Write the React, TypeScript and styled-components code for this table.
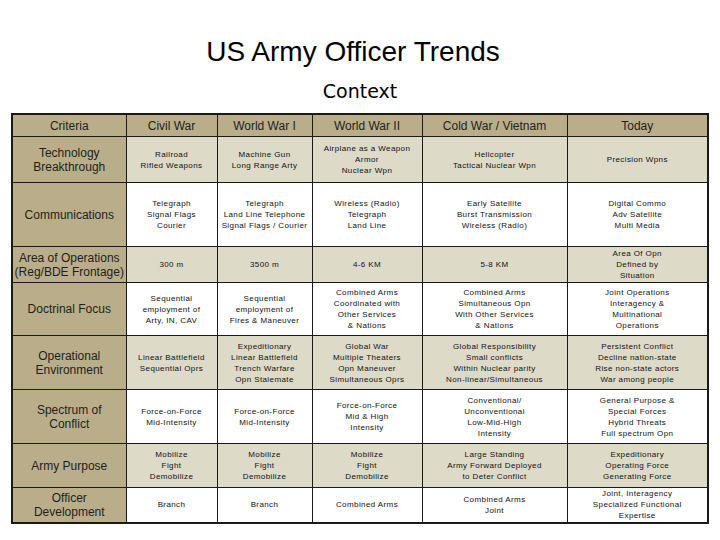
import styled, { createGlobalStyle } from "styled-components";

const GlobalStyle = createGlobalStyle`
  html, body {
    margin: 0;
    padding: 0;
    background: #ffffff;
  }
  body {
    width: 720px;
    height: 540px;
    overflow: hidden;
    font-family: "Liberation Sans", Arial, sans-serif;
  }
`;

type Row = {
  label: string[];
  cells: string[][];
  shaded: boolean;
  height: number;
};

const columns = [
  { title: "Criteria", width: 114 },
  { title: "Civil War", width: 91 },
  { title: "World War I", width: 95 },
  { title: "World War II", width: 110 },
  { title: "Cold War / Vietnam", width: 145 },
  { title: "Today", width: 141 },
];

const rows: Row[] = [
  {
    label: ["Technology", "Breakthrough"],
    shaded: true,
    height: 46,
    cells: [
      ["Railroad", "Rifled Weapons"],
      ["Machine Gun", "Long Range Arty"],
      ["Airplane as a Weapon", "Armor", "Nuclear Wpn"],
      ["Helicopter", "Tactical Nuclear Wpn"],
      ["Precision Wpns"],
    ],
  },
  {
    label: ["Communications"],
    shaded: false,
    height: 64,
    cells: [
      ["Telegraph", "Signal Flags", "Courier"],
      ["Telegraph", "Land Line Telephone", "Signal Flags / Courier"],
      ["Wireless (Radio)", "Telegraph", "Land Line"],
      ["Early Satellite", "Burst Transmission", "Wireless (Radio)"],
      ["Digital Commo", "Adv Satellite", "Multi Media"],
    ],
  },
  {
    label: ["Area of Operations", "(Reg/BDE Frontage)"],
    shaded: true,
    height: 36,
    cells: [
      ["300 m"],
      ["3500 m"],
      ["4-6 KM"],
      ["5-8 KM"],
      ["Area Of Opn", "Defined by", "Situation"],
    ],
  },
  {
    label: ["Doctrinal Focus"],
    shaded: false,
    height: 53,
    cells: [
      ["Sequential", "employment of", "Arty, IN, CAV"],
      ["Sequential", "employment of", "Fires & Maneuver"],
      ["Combined Arms", "Coordinated with", "Other Services", "& Nations"],
      ["Combined Arms", "Simultaneous  Opn", "With Other Services", "& Nations"],
      ["Joint Operations", "Interagency &", "Multinational", "Operations"],
    ],
  },
  {
    label: ["Operational", "Environment"],
    shaded: true,
    height: 54,
    cells: [
      ["Linear Battlefield", "Sequential Oprs"],
      ["Expeditionary", "Linear Battlefield", "Trench Warfare", "Opn Stalemate"],
      ["Global War", "Multiple Theaters", "Opn Maneuver", "Simultaneous Oprs"],
      ["Global Responsibility", "Small conflicts", "Within Nuclear parity", "Non-linear/Simultaneous"],
      ["Persistent Conflict", "Decline nation-state", "Rise non-state actors", "War among people"],
    ],
  },
  {
    label: ["Spectrum of", "Conflict"],
    shaded: false,
    height: 54,
    cells: [
      ["Force-on-Force", "Mid-Intensity"],
      ["Force-on-Force", "Mid-Intensity"],
      ["Force-on-Force", "Mid & High", "Intensity"],
      ["Conventional/", "Unconventional", "Low-Mid-High", "Intensity"],
      ["General Purpose &", "Special Forces", "Hybrid Threats", "Full spectrum Opn"],
    ],
  },
  {
    label: ["Army Purpose"],
    shaded: true,
    height: 44,
    cells: [
      ["Mobilize", "Fight", "Demobilize"],
      ["Mobilize", "Fight", "Demobilize"],
      ["Mobilize", "Fight", "Demobilize"],
      ["Large Standing", "Army Forward Deployed", "to Deter Conflict"],
      ["Expeditionary", "Operating Force", "Generating Force"],
    ],
  },
  {
    label: ["Officer", "Development"],
    shaded: false,
    height: 35,
    cells: [
      ["Branch"],
      ["Branch"],
      ["Combined Arms"],
      ["Combined Arms", "Joint"],
      ["Joint, Interagency", "Specialized Functional", "Expertise"],
    ],
  },
];

export default function App() {
  return (
    <>
      <GlobalStyle />
      <Slide>
        <Title>US Army Officer Trends</Title>
        <Subtitle>Context</Subtitle>
        <Grid>
          <colgroup>
            {columns.map((c) => (
              <col key={c.title} style={{ width: c.width }} />
            ))}
          </colgroup>
          <thead>
            <tr>
              {columns.map((c) => (
                <HeadCell key={c.title}>{c.title}</HeadCell>
              ))}
            </tr>
          </thead>
          <tbody>
            {rows.map((row) => (
              <tr key={row.label.join(" ")} style={{ height: row.height }}>
                <RowLabel>
                  {row.label.map((line) => (
                    <Line key={line}>{line}</Line>
                  ))}
                </RowLabel>
                {row.cells.map((cell, i) => (
                  <Cell key={i} $shaded={row.shaded}>
                    {cell.map((line, j) => (
                      <Line key={j}>{line}</Line>
                    ))}
                  </Cell>
                ))}
              </tr>
            ))}
          </tbody>
        </Grid>
      </Slide>
    </>
  );
}

const Slide = styled.div`
  width: 720px;
  height: 540px;
  display: flex;
  flex-direction: column;
  align-items: center;
  padding-top: 37px;
  box-sizing: border-box;
`;

const Title = styled.h1`
  margin: 0;
  padding-right: 14px;
  font-family: "Liberation Sans", Arial, sans-serif;
  font-weight: normal;
  font-size: 28px;
  line-height: 30px;
  color: #000;
`;

const Subtitle = styled.h2`
  margin: 12px 0 0;
  font-family: "DejaVu Sans", Verdana, sans-serif;
  font-weight: normal;
  font-size: 19px;
  line-height: 24px;
  color: #000;
`;

const Grid = styled.table`
  margin-top: 10px;
  width: 696px;
  table-layout: fixed;
  border-collapse: collapse;
  border: 2px solid #1a1a1a;
`;

const HeadCell = styled.th`
  height: 21px;
  padding: 0;
  background: #b9ae89;
  border: 1px solid #1a1a1a;
  font-family: "Liberation Sans", Arial, sans-serif;
  font-weight: normal;
  font-size: 12px;
  color: #1e1e1e;
  text-align: center;
  vertical-align: middle;
`;

const RowLabel = styled.td`
  padding: 0;
  background: #b9ae89;
  border: 1px solid #1a1a1a;
  font-family: "Liberation Sans", Arial, sans-serif;
  font-size: 12px;
  line-height: 14px;
  color: #1e1e1e;
  text-align: center;
  vertical-align: middle;
`;

const Cell = styled.td<{ $shaded: boolean }>`
  padding: 0 2px;
  background: ${({ $shaded }) => ($shaded ? "#dedac8" : "#ffffff")};
  border: 1px solid #1a1a1a;
  font-family: "Liberation Sans", Arial, sans-serif;
  font-size: 8px;
  letter-spacing: 0.4px;
  line-height: 11px;
  color: #111;
  text-align: center;
  vertical-align: middle;
  white-space: nowrap;
`;

const Line = styled.div``;
